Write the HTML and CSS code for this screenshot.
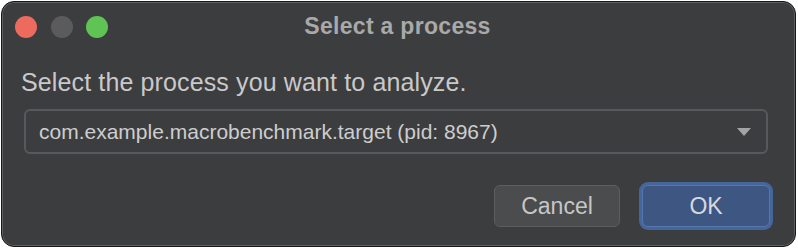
FILE: index.html
```html
<!DOCTYPE html>
<html>
<head>
<meta charset="utf-8">
<link rel="stylesheet" href="styles.css">
</head>
<body>
<div class="window">
  <div class="titlebar">
    <div class="lights">
      <span class="light red"></span>
      <span class="light grey"></span>
      <span class="light green"></span>
    </div>
    <div class="title">Select a process</div>
    <div></div>
  </div>
  <div class="content">
    <div class="label">Select the process you want to analyze.</div>
    <div class="dropdown">
      <span class="value">com.example.macrobenchmark.target (pid: 8967)</span>
      <svg class="arrow" width="14" height="8" viewBox="0 0 14 8"><path d="M0 0 H14 L7 8 Z" fill="#a3a4a6"/></svg>
    </div>
    <div class="buttons">
      <button class="btn cancel">Cancel</button>
      <button class="btn ok">OK</button>
    </div>
  </div>
</div>
</body>
</html>
```
FILE: styles.css
```css
html, body {
  margin: 0;
  padding: 0;
  background: #ffffff;
}
body {
  font-family: "Liberation Sans", Arial, sans-serif;
}
.window {
  margin: 1px 2px 2px 1px;
  width: 795px;
  height: 246px;
  box-sizing: border-box;
  border: 1px solid #161617;
  border-radius: 13px;
  background: #3c3d3f;
  box-shadow: inset 0 0 0 1px #5e5f61;
  overflow: hidden;
}
.titlebar {
  display: grid;
  grid-template-columns: 1fr auto 1fr;
  align-items: center;
  height: 49px;
}
.lights {
  display: flex;
  gap: 13.5px;
  padding-left: 13px;
}
.light {
  width: 22px;
  height: 22px;
  border-radius: 50%;
}
.red { background: #ec6a5e; }
.grey { background: #5b5b5d; }
.green { background: #5fc454; }
.title {
  font-size: 23px;
  font-weight: bold;
  color: #a9a9aa;
  letter-spacing: 0.3px;
  padding-right: 2px;
}
.content {
  display: flex;
  flex-direction: column;
  padding: 16px 25px 0 19px;
}
.label {
  font-size: 25px;
  line-height: 30px;
  color: #c9c9ca;
  letter-spacing: 0.13px;
}
.dropdown {
  margin: 12px 2px 0 3px;
  height: 45px;
  box-sizing: border-box;
  border: 2px solid #58595c;
  border-radius: 6px;
  display: flex;
  align-items: center;
  justify-content: space-between;
  padding: 0 15px 0 13px;
}
.value {
  font-size: 21px;
  color: #cdcdce;
}
.buttons {
  display: flex;
  justify-content: flex-end;
  align-items: center;
  gap: 22px;
  margin-top: 31px;
}
.btn {
  font-family: "Liberation Sans", Arial, sans-serif;
  font-size: 23px;
  height: 42px;
  box-sizing: border-box;
  border-radius: 6px;
  padding: 0;
}
.cancel {
  width: 126px;
  background: #4b4c4e;
  border: 1px solid #5d5e60;
  color: #c6c6c7;
}
.ok {
  width: 128px;
  background: #3d5682;
  border: 1px solid #5677ad;
  box-shadow: 0 0 0 3px #45669c;
  color: #d5d9e0;
}
```
